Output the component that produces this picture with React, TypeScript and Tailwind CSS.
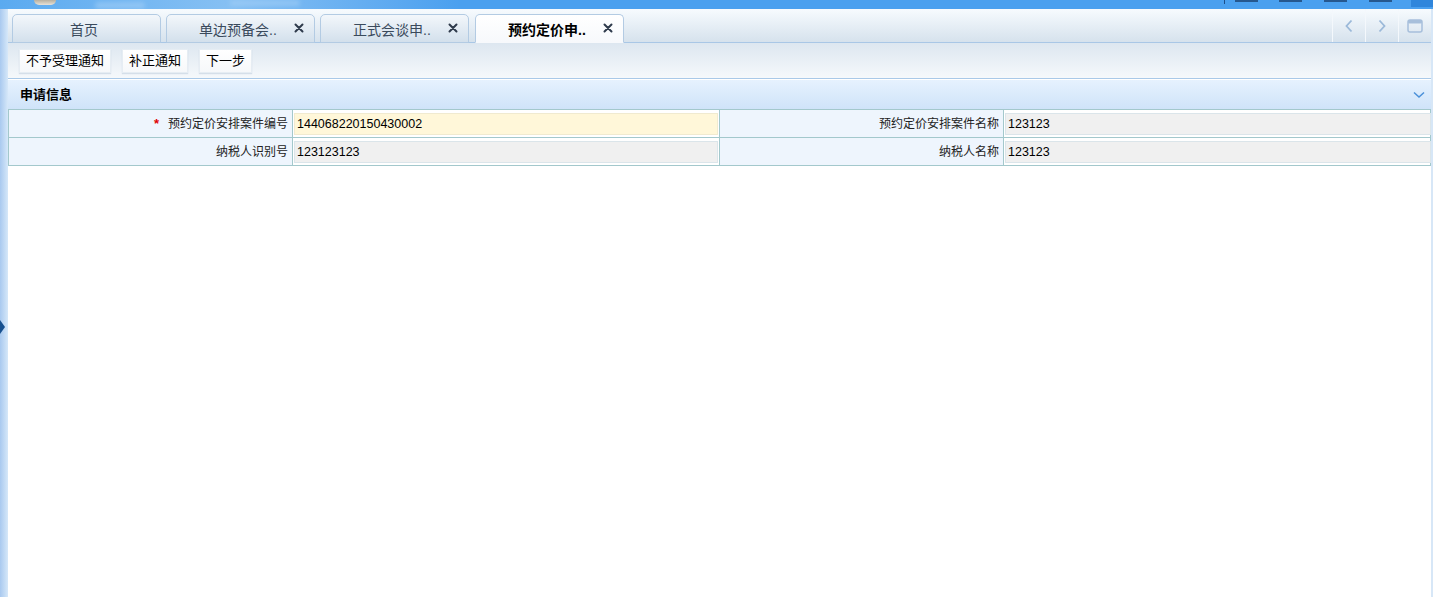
import React from "react";

const font = { fontFamily: '"Liberation Sans", "Noto Sans CJK SC", sans-serif' };

function CloseX() {
  return (
    <svg width="10" height="10" viewBox="0 0 10 10" className="block">
      <path d="M1.5 1.5 L8.5 8.5 M8.5 1.5 L1.5 8.5" stroke="#2f3b4c" strokeWidth="2" strokeLinecap="round" />
    </svg>
  );
}

function Tab({ label, active, closable }: { label: string; active?: boolean; closable?: boolean }) {
  return (
    <div
      className={
        "relative w-[149px] h-[29px] rounded-t-[5px] border border-[#b3cbe3] flex items-center " +
        (active
          ? "bg-gradient-to-b from-white to-[#f7f9fc] border-b-[#f7f9fc] z-10"
          : "bg-gradient-to-b from-[#f3f7fb] to-[#d3e0ec]")
      }
    >
      <div
        className={
          "w-[142px] text-center text-[14px] leading-none pt-[2px] " +
          (active ? "font-bold text-black" : "text-[#3a4a5c]")
        }
      >
        {label}
      </div>
      {closable && (
        <div className="absolute right-[10px] top-[8px]">
          <CloseX />
        </div>
      )}
    </div>
  );
}

function ToolButton({ label }: { label: string }) {
  return (
    <div className="h-[24px] px-[6px] flex items-center bg-gradient-to-b from-white to-[#f6f8fa] border border-[#e6edf3] shadow-[0_1px_1px_rgba(160,180,200,0.35)] text-[13px] text-black leading-none">
      {label}
    </div>
  );
}

function ValueBox({ value, yellow }: { value: string; yellow?: boolean }) {
  return (
    <div
      className={
        "h-[22px] flex items-center pl-[2px] text-[12.5px] text-black border " +
        (yellow ? "bg-[#fff7d9] border-[#f0ead0]" : "bg-[#f0f0f0] border-[#dbe5ea]")
      }
    >
      {value}
    </div>
  );
}

export default function App() {
  return (
    <div className="w-[1433px] h-[597px] overflow-hidden flex flex-col bg-white" style={font}>
      {/* top strip */}
      <div className="relative h-[9px] bg-[#4aa0ef] overflow-hidden">
        <div className="absolute left-0 top-0 h-[9px] w-[460px] bg-gradient-to-r from-[#5aaaf0] via-[#86c0f3] to-[#4aa0ef]" />
        <div className="absolute left-[34px] top-0 h-[5px] w-[22px] rounded-b-[6px] bg-gradient-to-b from-[#b8b0a0] to-[#e8e2d8]" />
        <div className="absolute left-[95px] top-[2px] h-[7px] w-[50px] rounded-full bg-[#a9d2f7] opacity-50 blur-[2px]" />
        <div className="absolute left-[230px] top-0 h-[6px] w-[70px] rounded-full bg-[#a9d2f7] opacity-50 blur-[2px]" />
        <div className="absolute left-[1224px] top-0 h-[4px] w-[1px] bg-[#1d4f8a]" />
        <div className="absolute left-[1235px] top-0 h-[2px] w-[23px] bg-[#26588f]" />
        <div className="absolute left-[1279px] top-0 h-[2px] w-[23px] bg-[#26588f]" />
        <div className="absolute left-[1324px] top-0 h-[2px] w-[23px] bg-[#26588f]" />
        <div className="absolute left-[1369px] top-0 h-[2px] w-[23px] bg-[#26588f]" />
        <div className="absolute left-[1411px] top-0 h-[7px] w-[22px] bg-[#2f86dc]" />
      </div>

      <div className="flex-1 flex min-h-0">
        {/* left sidebar */}
        <div className="relative w-[8px] bg-gradient-to-r from-[#a9c9ef] to-[#d6e8f9]">
          <div className="absolute left-0 top-[311px] w-0 h-0 border-t-[7px] border-b-[7px] border-l-[5px] border-t-transparent border-b-transparent border-l-[#17508f]" />
        </div>

        {/* main */}
        <div className="w-[1423px] flex flex-col">
          {/* tab bar */}
          <div className="h-[34px] flex bg-gradient-to-b from-[#f7fbfe] to-[#d6e2ed] border-b border-[#a9c7e6]">
            <div className="flex-1 flex items-end gap-[5px] pl-[4px] -mb-[1px]">
              <Tab label="首页" />
              <Tab label="单边预备会.." closable />
              <Tab label="正式会谈申.." closable />
              <div className="ml-[1px]">
                <Tab label="预约定价申.." active closable />
              </div>
            </div>
            <div className="flex h-full">
              <div className="w-[33px] h-full border-l border-[#f4f8fc] flex items-center justify-center">
                <svg width="10" height="14" viewBox="0 0 10 14">
                  <path d="M7.5 1.5 L2.5 7 L7.5 12.5" stroke="#9bb9d9" strokeWidth="1.8" fill="none" />
                </svg>
              </div>
              <div className="w-[33px] h-full border-l border-[#f4f8fc] flex items-center justify-center">
                <svg width="10" height="14" viewBox="0 0 10 14">
                  <path d="M2.5 1.5 L7.5 7 L2.5 12.5" stroke="#9bb9d9" strokeWidth="1.8" fill="none" />
                </svg>
              </div>
              <div className="w-[33px] h-full border-l border-[#f4f8fc] flex items-center justify-center">
                <svg width="16" height="14" viewBox="0 0 16 14">
                  <rect x="1" y="1" width="14" height="12" rx="2" fill="none" stroke="#a7bfdb" strokeWidth="1.5" />
                  <rect x="1" y="1" width="14" height="3.5" rx="1.5" fill="#a7bfdb" />
                </svg>
              </div>
            </div>
          </div>

          {/* toolbar */}
          <div className="h-[36px] flex items-center gap-[11px] pl-[11px] bg-gradient-to-b from-[#dde7f0] to-[#f5f8fb] border-b border-[#a9c9e8]">
            <ToolButton label="不予受理通知" />
            <ToolButton label="补正通知" />
            <ToolButton label="下一步" />
          </div>

          {/* section header */}
          <div className="h-[30px] flex items-center justify-between pl-[12px] pr-[6px] border-t border-white bg-gradient-to-b from-[#e6f2fe] to-[#cfe3f9]">
            <span className="text-[13px] font-bold text-black">申请信息</span>
            <svg width="12" height="8" viewBox="0 0 12 8">
              <path d="M1 1.5 L6 6 L11 1.5" stroke="#4a90d9" strokeWidth="1.5" fill="none" />
            </svg>
          </div>

          {/* form table */}
          <div className="grid grid-cols-[284px_427px_284px_428px] border border-[#a3c8cc] text-[12px]">
            <div className="h-[28px] bg-[#eef5fd] border-r border-b border-[#a3c8cc] flex items-center justify-end pr-[4px] text-[#222]">
              <span className="text-[#e00000] font-bold mr-[9px] text-[13px]">*</span>
              预约定价安排案件编号
            </div>
            <div className="h-[28px] border-r border-b border-[#a3c8cc] px-[1px] pt-[3px]">
              <ValueBox value="144068220150430002" yellow />
            </div>
            <div className="h-[28px] bg-[#eef5fd] border-r border-b border-[#a3c8cc] flex items-center justify-end pr-[4px] text-[#222]">
              预约定价安排案件名称
            </div>
            <div className="h-[28px] border-b border-[#a3c8cc] px-[1px] pt-[3px]">
              <ValueBox value="123123" />
            </div>

            <div className="h-[27px] bg-[#eef5fd] border-r border-[#a3c8cc] flex items-center justify-end pr-[4px] text-[#222]">
              纳税人识别号
            </div>
            <div className="h-[27px] border-r border-[#a3c8cc] px-[1px] pt-[3px]">
              <ValueBox value="123123123" />
            </div>
            <div className="h-[27px] bg-[#eef5fd] border-r border-[#a3c8cc] flex items-center justify-end pr-[4px] text-[#222]">
              纳税人名称
            </div>
            <div className="h-[27px] px-[1px] pt-[3px]">
              <ValueBox value="123123" />
            </div>
          </div>

          <div className="flex-1 bg-white" />
        </div>

        {/* right strip */}
        <div className="w-[2px] bg-[#d7e7f7]" />
      </div>
    </div>
  );
}
